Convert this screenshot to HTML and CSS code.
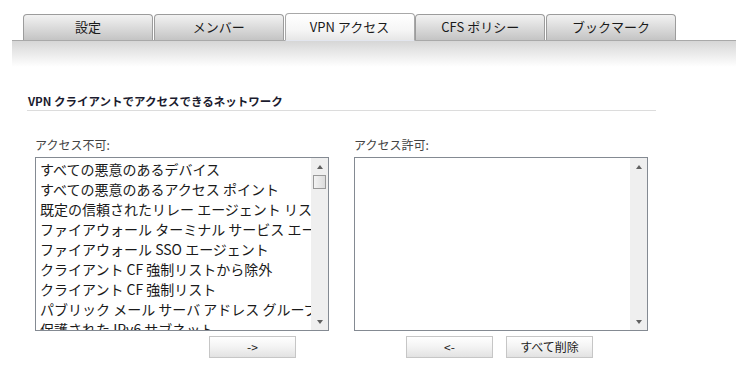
FILE: index.html
```html
<!DOCTYPE html>
<html lang="ja">
<head>
<meta charset="utf-8">
<link rel="stylesheet" href="styles.css">
</head>
<body>
<div class="tabbar">
  <div class="tab">設定</div>
  <div class="tab">メンバー</div>
  <div class="tab active">VPN アクセス</div>
  <div class="tab">CFS ポリシー</div>
  <div class="tab">ブックマーク</div>
</div>
<div class="band"></div>
<div class="content">
  <h2 class="heading">VPN クライアントでアクセスできるネットワーク</h2>
  <div class="columns">
    <div class="col">
      <div class="label">アクセス不可:</div>
      <div class="listbox">
        <div class="items">
          <div class="item">すべての悪意のあるデバイス</div>
          <div class="item">すべての悪意のあるアクセス ポイント</div>
          <div class="item">既定の信頼されたリレー エージェント リスト</div>
          <div class="item">ファイアウォール ターミナル サービス エージェント</div>
          <div class="item">ファイアウォール SSO エージェント</div>
          <div class="item">クライアント CF 強制リストから除外</div>
          <div class="item">クライアント CF 強制リスト</div>
          <div class="item">パブリック メール サーバ アドレス グループ</div>
          <div class="item">保護された IPv6 サブネット</div>
        </div>
        <div class="scrollbar">
          <div class="arrow up"></div>
          <div class="track"><div class="thumb"></div></div>
          <div class="arrow down"></div>
        </div>
      </div>
      <div class="btnrow left">
        <button class="btn">-&gt;</button>
      </div>
    </div>
    <div class="col">
      <div class="label">アクセス許可:</div>
      <div class="listbox">
        <div class="items"></div>
        <div class="scrollbar">
          <div class="arrow up"></div>
          <div class="track"></div>
          <div class="arrow down"></div>
        </div>
      </div>
      <div class="btnrow center">
        <button class="btn">&lt;-</button>
        <button class="btn">すべて削除</button>
      </div>
    </div>
  </div>
</div>
</body>
</html>
```

FILE: styles.css
```css
html, body {
  margin: 0;
  padding: 0;
  background: #ffffff;
  font-family: "Noto Sans CJK JP", "Noto Sans", sans-serif;
  color: #1a1a1a;
}

.tabbar {
  display: flex;
  align-items: flex-end;
  margin-top: 13px;
  margin-left: 12px;
  padding-left: 11px;
  height: 28px;
  border-bottom: 1px solid #a9a9a9;
  box-sizing: border-box;
  position: relative;
}

.tab {
  width: 130px;
  height: 26px;
  box-sizing: border-box;
  border: 1px solid #9c9c9c;
  border-bottom: none;
  border-radius: 4px 4px 0 0;
  background: linear-gradient(#f2f2f2, #d9d9d9 55%, #c4c4c4);
  font-size: 13px;
  line-height: 24px;
  text-align: center;
  color: #1a1a1a;
  margin-right: 0.75px;
}

.tab.active {
  height: 28px;
  margin-bottom: -1px;
  background: linear-gradient(#ffffff, #f6f6f6 60%, #e6e6e6);
  border-color: #a8a8a8;
  line-height: 26px;
  position: relative;
  z-index: 1;
  border-bottom: 1px solid #e3e6ee;
}

.band {
  margin-left: 12px;
  height: 26px;
  background: linear-gradient(#d6d6d6, #ebebeb 50%, #ffffff);
}

.content {
  padding-left: 27px;
}

.heading {
  margin: 26px 0 0 0;
  width: 628px;
  font-size: 11.5px;
  font-weight: bold;
  color: #1b1b2e;
  line-height: 16px;
  padding: 0 0 1px 1px;
  border-bottom: 1px solid #dcdcdc;
}

.columns {
  display: flex;
  gap: 25px;
  padding-left: 8px;
  margin-top: 26px;
}

.col {
  width: 294px;
}

.label {
  font-size: 12px;
  color: #444;
  line-height: 16px;
  height: 17px;
  margin-bottom: 3px;
}

.listbox {
  height: 174px;
  box-sizing: border-box;
  border: 1px solid #848a92;
  display: flex;
  background: #fff;
}

.items {
  flex: 1;
  overflow: hidden;
  padding: 1px 0 0 4px;
  min-width: 0;
}

.item {
  font-size: 14px;
  line-height: 20px;
  white-space: nowrap;
  color: #1a1a1a;
}

.scrollbar {
  width: 17px;
  background: #efefef;
  display: flex;
  flex-direction: column;
}

.arrow {
  height: 17px;
  display: flex;
  align-items: center;
  justify-content: center;
}

.arrow.up::before {
  content: "";
  border-left: 3.5px solid transparent;
  border-right: 3.5px solid transparent;
  border-bottom: 4px solid #606060;
}

.arrow.down::before {
  content: "";
  border-left: 3.5px solid transparent;
  border-right: 3.5px solid transparent;
  border-top: 4px solid #606060;
}

.track {
  flex: 1;
  display: flex;
  flex-direction: column;
  align-items: center;
}

.thumb {
  width: 13px;
  height: 14px;
  box-sizing: border-box;
  border: 1px solid #999;
  background: linear-gradient(90deg, #f3f3f3, #dcdcdc);
}

.btnrow {
  display: flex;
  gap: 13px;
  margin-top: 5px;
}

.btnrow.left {
  padding-left: 174px;
}

.btnrow.center {
  justify-content: center;
  padding-right: 3px;
}

.btn {
  width: 87px;
  height: 22px;
  box-sizing: border-box;
  border: 1px solid #c6c6c6;
  background: linear-gradient(#ffffff, #f3f3f3 50%, #e2e2e2);
  font-family: "Noto Sans CJK JP", "Noto Sans", sans-serif;
  font-size: 12px;
  color: #222;
  padding: 0;
  line-height: 20px;
}
```
